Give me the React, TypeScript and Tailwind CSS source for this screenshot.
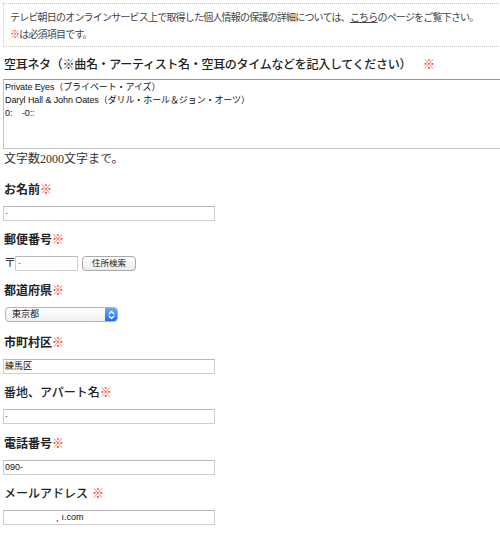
import React from "react";

const mincho = { fontFamily: '"Liberation Serif", "Noto Sans CJK JP", serif' };
const gothic = { fontFamily: '"Liberation Sans", "Noto Sans CJK JP", sans-serif' };

function Req({ space = false }: { space?: boolean }) {
  return <span className={`text-[#ff2a00] font-normal ${space ? "ml-[4px]" : ""}`}>※</span>;
}

function Label({ children, bold = true, gap = "mt-[9px]" }: { children: React.ReactNode; bold?: boolean; gap?: string }) {
  return (
    <div
      className={`ml-[4px] h-[20px] leading-[20px] text-[12px] text-[#222] ${bold ? "font-bold" : "font-medium"} ${gap}`}
      style={mincho}
    >
      {children}
    </div>
  );
}

function TextBox({ value = "", width = "w-[212px]", pad = "pl-[3px]" }: { value?: string; width?: string; pad?: string }) {
  return (
    <div
      className={`h-[15px] ${width} border border-[#cfcfcf] border-t-[#b9b9b9] bg-white ${pad} text-[9px] leading-[13px] text-[#111] overflow-hidden whitespace-nowrap`}
      style={gothic}
    >
      {value}
    </div>
  );
}

export default function App() {
  return (
    <div className="w-[500px] h-[533px] overflow-hidden bg-white text-[#333]">
      {/* notice box */}
      <div
        className="mt-[3px] ml-[3px] w-[520px] border border-dotted border-[#c8c8c8] pl-[6px] pt-[5px] pb-[3px] text-[10px] leading-[17px] tracking-[-0.8px] text-[#444] whitespace-nowrap"
        style={mincho}
      >
        <div>
          テレビ朝日のオンラインサービス上で取得した個人情報の保護の詳細については、
          <span className="underline">こちら</span>のページをご覧下さい。
        </div>
        <div>
          <span className="text-[#ff2a00]">※</span>は必須項目です。
        </div>
      </div>

      {/* song entry */}
      <div
        className="mt-[8px] ml-[4px] h-[20px] leading-[20px] text-[12px] tracking-[-0.3px] font-medium text-[#222] whitespace-nowrap"
        style={mincho}
      >
        空耳ネタ（※曲名・アーティスト名・空耳のタイムなどを記入してください）
        <span className="ml-[12px] text-[#ff2a00] font-normal">※</span>
      </div>
      <div
        className="mt-[4px] ml-[3px] w-[520px] h-[70px] border border-[#c4c4c4] border-t-[#999] bg-white pl-[1px] pt-[1px] text-[9px] leading-[13px] tracking-[-0.1px] text-[#111]"
        style={gothic}
      >
        <div>Private Eyes（プライベート・アイズ）</div>
        <div>Daryl Hall &amp; John Oates（ダリル・ホール＆ジョン・オーツ）</div>
        <div>0:&nbsp;&nbsp;&nbsp;&nbsp;-0::</div>
      </div>
      <div className="ml-[4px] h-[20px] leading-[20px] text-[12px] text-[#333]" style={mincho}>
        文字数2000文字まで。
      </div>

      {/* name */}
      <Label gap="mt-[11px]">
        お名前<Req />
      </Label>
      <div className="mt-[6px] ml-[3px]">
        <TextBox value="·" pad="pl-[1px]" />
      </div>

      {/* postal code */}
      <Label>
        郵便番号<Req />
      </Label>
      <div className="mt-[6px] ml-[4px] flex items-center h-[15px]">
        <span className="text-[12px] leading-[15px] text-[#333]" style={gothic}>〒</span>
        <div className="ml-[-1px]">
          <TextBox value="·" width="w-[63px]" pad="pl-[2px]" />
        </div>
        <div
          className="ml-[4px] h-[15px] w-[54px] rounded-[4px] border border-[#a9a9a9] bg-gradient-to-b from-white to-[#ececec] text-center text-[8.5px] leading-[13px] text-[#222]"
          style={gothic}
        >
          住所検索
        </div>
      </div>

      {/* prefecture */}
      <Label gap="mt-[10px]">
        都道府県<Req />
      </Label>
      <div className="mt-[6px] ml-[5px] flex h-[15px] w-[113px] rounded-[4px] border border-[#b5b5b5] bg-gradient-to-b from-white to-[#f0f0f0] overflow-hidden">
        <div className="flex-1 pl-[6px] text-[9px] leading-[13px] text-[#222]" style={gothic}>
          東京都
        </div>
        <div className="w-[12px] h-full bg-gradient-to-b from-[#6aa8ff] to-[#1c6df0] flex items-center justify-center">
          <svg width="7" height="10" viewBox="0 0 7 10" fill="none" stroke="white" strokeWidth="1.3" strokeLinecap="round" strokeLinejoin="round">
            <path d="M1.2 3.8 L3.5 1.5 L5.8 3.8" />
            <path d="M1.2 6.2 L3.5 8.5 L5.8 6.2" />
          </svg>
        </div>
      </div>

      {/* city */}
      <Label gap="mt-[11px]">
        市町村区<Req />
      </Label>
      <div className="mt-[6px] ml-[3px]">
        <TextBox value="練馬区" pad="pl-[1px]" />
      </div>

      {/* address */}
      <Label bold={false} gap="mt-[9px]">
        番地、アパート名<Req />
      </Label>
      <div className="mt-[6px] ml-[3px]">
        <TextBox value="·" pad="pl-[1px]" />
      </div>

      {/* phone */}
      <Label gap="mt-[10px]">
        電話番号<Req />
      </Label>
      <div className="mt-[6px] ml-[3px]">
        <TextBox value="090-" pad="pl-[1px]" />
      </div>

      {/* email */}
      <Label bold={false} gap="mt-[9px]">
        メールアドレス<Req space />
      </Label>
      <div className="mt-[6px] ml-[3px]">
        <TextBox value="¸ ı.com" pad="pl-[52px]" />
      </div>
    </div>
  );
}
